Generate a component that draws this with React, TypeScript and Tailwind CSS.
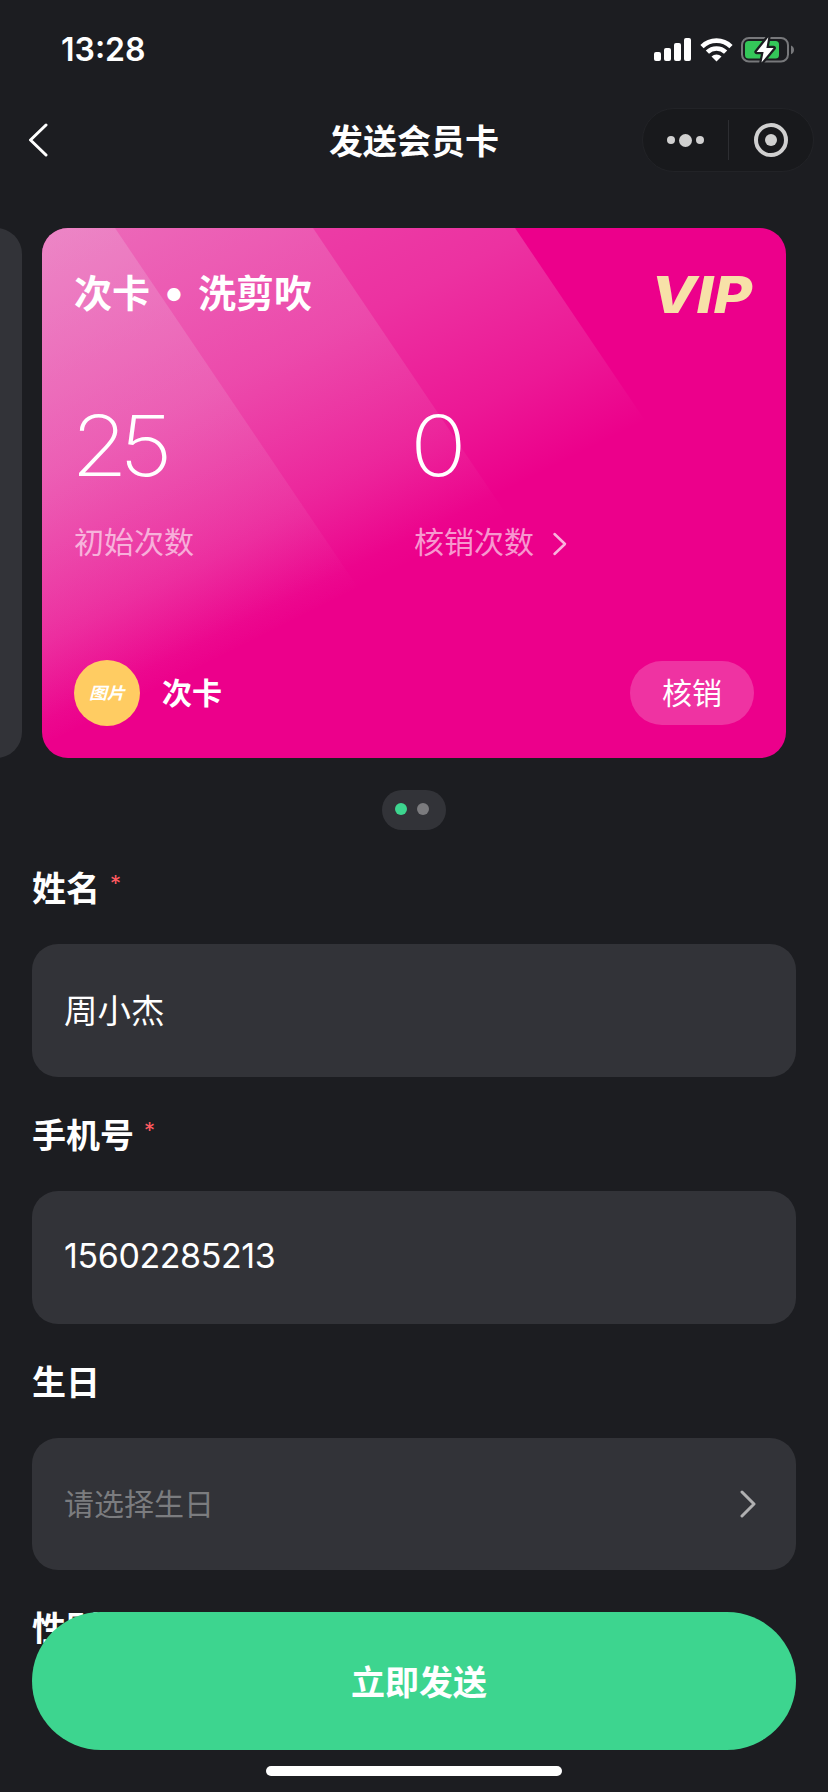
import { ReactNode, useState } from 'react'

const INK = '#1c1d21'

function StatusBar() {
  return (
    <div className="flex h-[88px] items-start justify-between pl-[61px] pr-[33px] pt-[30px]">
      <span className="font-['Inter',sans-serif] text-[32px] font-semibold leading-[39px]">13:28</span>
      <div className="flex h-[39px] items-center">
        <svg width="37" height="23" viewBox="0 0 37 23" fill="#fff">
          <rect x="0" y="14" width="7" height="9" rx="2" />
          <rect x="10" y="10" width="7" height="13" rx="2" />
          <rect x="20" y="5" width="7" height="18" rx="2" />
          <rect x="30" y="0" width="7" height="23" rx="2" />
        </svg>
        <svg className="ml-[9px]" width="33" height="24" viewBox="0 0 33 24">
          <g fill="none" stroke="#fff" strokeWidth="4.6">
            <path d="M2 8.6a20.6 20.6 0 0 1 29 0" />
            <path d="M7.4 14.2a13 13 0 0 1 18.2 0" />
          </g>
          <path d="M16.5 23.6l-5-5.2a7.2 7.2 0 0 1 10 0z" fill="#fff" />
        </svg>
        <svg className="ml-[8px]" width="54" height="28" viewBox="0 0 54 28">
          <rect x="1" y="2" width="46" height="23.6" rx="7" fill="none" stroke="#77787b" strokeWidth="2" />
          <path d="M50 9.4c2 .8 3 2.4 3 4.4s-1 3.6-3 4.4z" fill="#77787b" />
          <rect x="4" y="5" width="34" height="17.6" rx="3.5" fill="#34c759" />
          <path
            d="M27.3 1.2L15.6 16h7L20.5 26.6 32.6 12h-7.2z"
            fill="#fff"
            stroke={INK}
            strokeWidth="4.5"
            strokeLinejoin="round"
            paintOrder="stroke"
          />
        </svg>
      </div>
    </div>
  )
}

function NavBar() {
  return (
    <div className="flex h-[104px] items-center justify-between pl-7 pr-[14px]">
      <button className="w-[172px]">
        <svg width="20" height="34" viewBox="0 0 20 34" fill="none">
          <path d="M18 2L2.5 17 18 32" stroke="#fff" strokeWidth="3" strokeLinecap="round" strokeLinejoin="round" />
        </svg>
      </button>
      <h1 className="mr-[14px] pb-0.5 text-[34px] font-bold">发送会员卡</h1>
      <div className="flex h-16 w-[172px] items-center rounded-full border border-[#222327] bg-[#18191c]">
        <button className="flex flex-1 items-center justify-center gap-1">
          <span className="size-2 rounded-full bg-[#d0d0d0]"></span>
          <span className="size-[13px] rounded-full bg-[#d0d0d0]"></span>
          <span className="size-2 rounded-full bg-[#d0d0d0]"></span>
        </button>
        <span className="h-10 w-px bg-[#2d2e32]"></span>
        <button className="flex flex-1 items-center justify-center">
          <span className="flex size-[34px] items-center justify-center rounded-full border-4 border-[#d0d0d0]">
            <span className="size-3 rounded-full bg-[#d0d0d0]"></span>
          </span>
        </button>
      </div>
    </div>
  )
}

function CardShine() {
  return (
    <svg className="absolute inset-0" width="744" height="530" viewBox="0 0 744 530">
      <defs>
        <linearGradient id="wide" gradientUnits="userSpaceOnUse" x1="0" y1="0" x2="198" y2="396">
          <stop offset="0" stopColor="#ecd8ea" stopOpacity=".34" />
          <stop offset=".5" stopColor="#ecd8ea" stopOpacity=".23" />
          <stop offset=".8" stopColor="#ecd8ea" stopOpacity=".11" />
          <stop offset="1" stopColor="#ecd8ea" stopOpacity="0" />
        </linearGradient>
        <linearGradient id="narrow" gradientUnits="userSpaceOnUse" x1="0" y1="0" x2="208" y2="416">
          <stop offset="0" stopColor="#ecd8ea" stopOpacity=".24" />
          <stop offset=".5" stopColor="#ecd8ea" stopOpacity=".14" />
          <stop offset=".8" stopColor="#ecd8ea" stopOpacity=".07" />
          <stop offset="1" stopColor="#ecd8ea" stopOpacity="0" />
        </linearGradient>
      </defs>
      <path d="M0 0H473L831 530H0z" fill="url(#wide)" />
      <path d="M0 0H271L629 530H0z" fill="url(#narrow)" />
      <path d="M0 0H73L431 530H0z" fill="url(#narrow)" />
    </svg>
  )
}

function MemberCard() {
  return (
    <div className="relative h-[530px] w-[744px] shrink-0 overflow-hidden rounded-[26px] bg-[#ec008b]">
      <CardShine />
      <div className="relative flex h-full flex-col px-8 pt-8">
        <div className="flex h-[68px] items-center justify-between">
          <h2 className="flex items-center pb-2 text-[38px] font-bold">
            次卡
            <span className="w-12 pt-1 text-center font-['Inter',sans-serif] text-[42px] leading-none">•</span>
            洗剪吹
          </h2>
          <span className="mr-0.5 origin-right scale-x-116 font-['Inter',sans-serif] text-[51px] font-extrabold italic leading-none text-[#f7e1a8]">
            VIP
          </span>
        </div>

        <div className="mt-[68px] flex">
          <div className="w-[340px]">
            <p className="-ml-[3px] origin-left scale-x-110 font-['Inter',sans-serif] text-[84px] font-extralight leading-[100px] tracking-[-8px]">25</p>
            <p className="mt-[22px] text-[30px] leading-[44px] text-white/60">初始次数</p>
          </div>
          <div className="w-[340px]">
            <p className="-ml-1 origin-left scale-x-112 font-['Inter',sans-serif] text-[84px] font-extralight leading-[100px]">0</p>
            <p className="mt-[22px] flex items-center text-[30px] leading-[44px] text-white/60">
              核销次数
              <svg className="ml-[18px] mt-2" width="16" height="24" viewBox="0 0 16 24" fill="none">
                <path d="M2.5 2L13 12 2.5 22" stroke="#fff" strokeOpacity=".7" strokeWidth="2.5" strokeLinecap="round" strokeLinejoin="round" />
              </svg>
            </p>
          </div>
        </div>

        <div className="mt-[98px] flex h-[66px] items-center">
          <div className="flex size-[66px] items-center justify-center rounded-full bg-[#ffcc62]">
            <span className="scale-y-90 pb-0.5 text-[18px] font-bold italic leading-none">图片</span>
          </div>
          <span className="ml-[22px] flex-1 pb-1 text-[30px] font-bold">次卡</span>
          <button className="h-16 w-[124px] rounded-full bg-white/20 pb-1 text-[30px]">核销</button>
        </div>
      </div>
    </div>
  )
}

function Field({ label, required, children }: { label: string; required?: boolean; children?: ReactNode }) {
  return (
    <div className="pt-[34px]">
      <div className="mb-8 flex h-12 items-center pb-1 text-[34px] font-bold">
        {label}
        {required && <span className="mb-1.5 ml-2.5 font-['Inter',sans-serif] text-[22px] font-normal leading-none text-[#ff5a60]">*</span>}
      </div>
      {children}
    </div>
  )
}

export default function App() {
  const [name, setName] = useState('周小杰')
  const [phone, setPhone] = useState('15602285213')

  return (
    <div className="relative h-[1792px] w-[828px] overflow-hidden bg-[#1c1d21] font-['Noto_Sans_CJK_SC',sans-serif] text-white">
      <StatusBar />
      <NavBar />

      {/* Card carousel */}
      <div className="mt-9 flex justify-end gap-5 pr-[42px]">
        <div className="h-[530px] w-[744px] shrink-0 rounded-[26px] bg-[#323338]"></div>
        <MemberCard />
      </div>
      <div className="mx-auto mt-8 flex h-10 w-16 items-center gap-2.5 rounded-full bg-[#323338] pb-0.5 pl-[13px]">
        <span className="size-3 rounded-full bg-[#3dd58f]"></span>
        <span className="size-3 rounded-full bg-[#7b7b7e]"></span>
      </div>

      {/* Form */}
      <div className="px-8">
        <Field label="姓名" required>
          <input
            value={name}
            onChange={e => setName(e.target.value)}
            className="block h-[133px] w-full rounded-[26px] bg-[#323338] px-8 pb-1 text-[33.5px] outline-none"
          />
        </Field>
        <Field label="手机号" required>
          <input
            value={phone}
            onChange={e => setPhone(e.target.value)}
            className="block h-[133px] w-full rounded-[26px] bg-[#323338] px-8 pb-1 font-['Inter',sans-serif] text-[34px] tracking-[-0.4px] outline-none"
          />
        </Field>
        <Field label="生日">
          <div className="flex h-[132px] items-center justify-between rounded-[26px] bg-[#323338] pl-8 pr-[38px] text-[30px] text-[#7b7c7f]">
            <span className="pb-1">请选择生日</span>
            <svg width="20" height="28" viewBox="0 0 20 28" fill="none">
              <path d="M4 2L16 14 4 26" stroke="#b0b0b1" strokeWidth="3" strokeLinecap="round" strokeLinejoin="round" />
            </svg>
          </div>
        </Field>
        <Field label="性别" />
      </div>

      {/* Submit bar */}
      <div className="absolute inset-x-8 bottom-4 flex flex-col items-center">
        <button className="h-[138px] w-full rounded-full bg-[#3dd58f] pb-0.5 pl-2.5 text-[34px] font-bold">立即发送</button>
        <span className="mt-4 h-2.5 w-[296px] rounded-full bg-white"></span>
      </div>
    </div>
  )
}
